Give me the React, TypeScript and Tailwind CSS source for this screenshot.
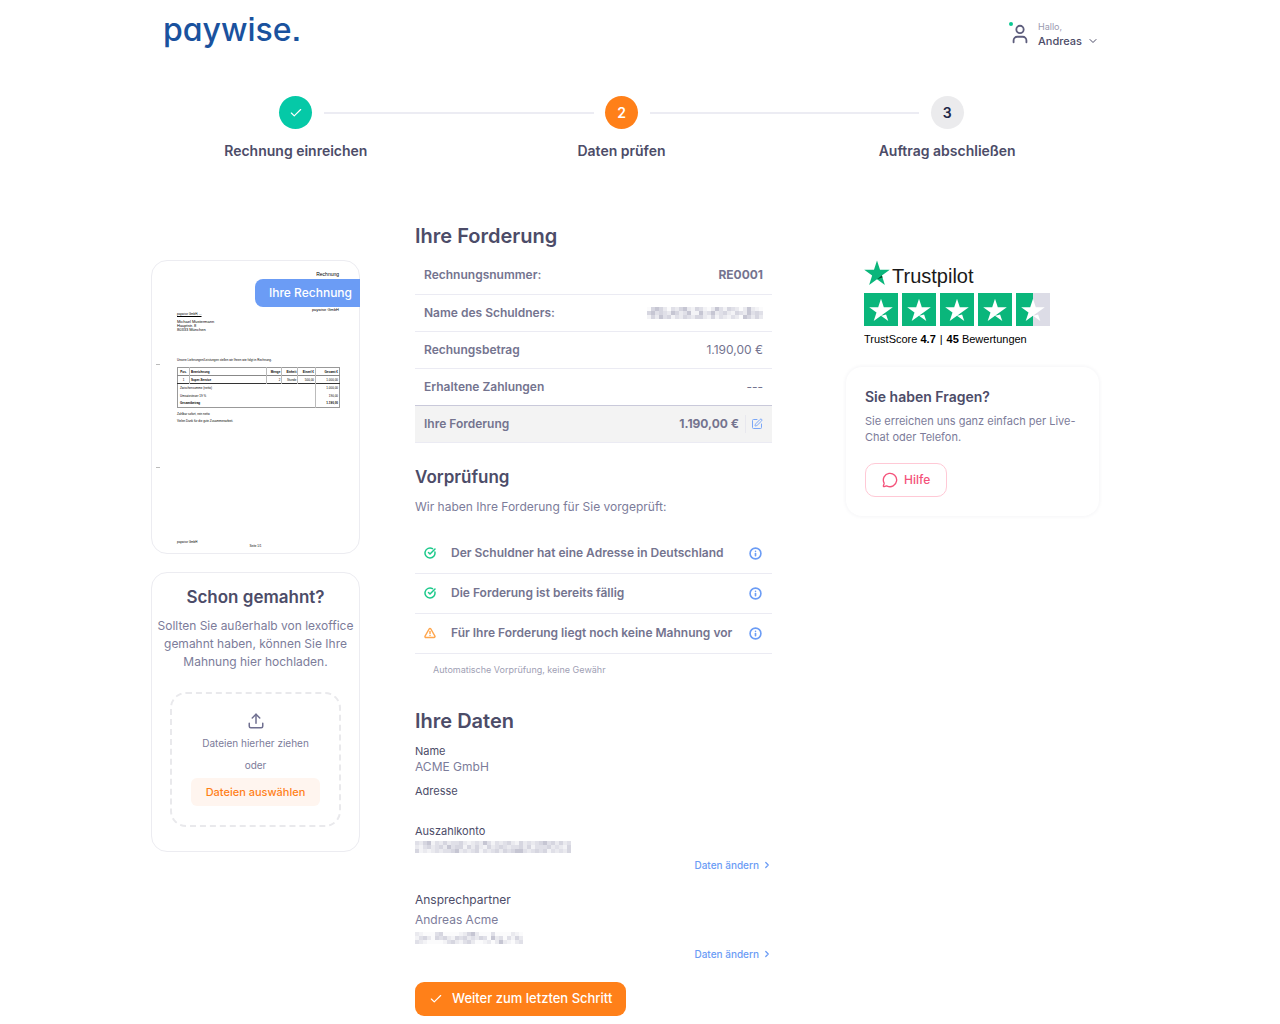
import React from "react";
import {
  Check,
  ChevronDown,
  ChevronRight,
  CircleCheckBig,
  Info,
  MessageCircle,
  SquarePen,
  TriangleAlert,
  Upload,
  User,
} from "lucide-react";

const SHADES = ["#fbfbfc", "#f3f3f6", "#eaeaef", "#e0e0e8", "#d6d6e0", "#c6c6d3"];

/* Pixelated stand-in for private data: each digit is the shade of one cell. */
function Mosaic({ rows, cell, label }: { rows: string[]; cell: number; label: string }) {
  const width = rows[0].length * cell;
  const height = rows.length * cell;
  return (
    <svg width={width} height={height} role="img" aria-label={label} shapeRendering="crispEdges">
      {rows.map((row, y) =>
        row.split("").map((shade, x) => (
          <rect key={`${x}-${y}`} x={x * cell} y={y * cell} width={cell} height={cell} fill={SHADES[Number(shade)]} />
        )),
      )}
    </svg>
  );
}

const STAR = "M12 1.5l2.55 7.85h8.25l-6.68 4.85 2.55 7.85L12 17.2l-6.67 4.85 2.55-7.85L1.2 9.35h8.25z";

function StarTile({ half = false }: { half?: boolean }) {
  return (
    <svg width="34" height="33" viewBox="0 0 34 33" aria-hidden="true">
      <rect width="34" height="33" fill={half ? "#dcdce6" : "#0ab67b"} />
      {half && <rect width="17" height="33" fill="#0ab67b" />}
      <path
        d="M28.8 14.2H19.8L17 5.7l-2.8 8.5H5.2l7.3 5.3-2.8 8.5 7.3-5.3 4.5-3.2zM17 22.7l5.1-1.3 2.2 6.6z"
        fill="#fff"
      />
    </svg>
  );
}

function Trustpilot() {
  return (
    <a href="#trustpilot" className="block pl-[18px] font-['Liberation_Sans',sans-serif] text-[#191919]">
      <span className="flex items-start">
        <svg width="26" height="26" viewBox="1 1 22 22" aria-hidden="true">
          <path d={STAR} fill="#0ab67b" />
          <path d="M16.7 15.9l-.58-1.7L12 17.2z" fill="#005128" />
        </svg>
        <span className="pt-1 pl-[2px] text-[20px] leading-6">Trustpilot</span>
      </span>
      <span className="mt-[5px] flex gap-1">
        <StarTile />
        <StarTile />
        <StarTile />
        <StarTile />
        <StarTile half />
      </span>
      <span className="mt-[5px] block text-[11px] leading-4 text-black">
        TrustScore <b>4.7</b>
        <span className="mx-1">|</span>
        <b>45</b> Bewertungen
      </span>
    </a>
  );
}

function Step({ title, children, tone, line }: { title: string; children: React.ReactNode; tone: string; line?: boolean }) {
  return (
    <li className="relative flex flex-1 flex-col items-center">
      <span className={`flex size-[33px] items-center justify-center rounded-full text-[14px] font-semibold ${tone}`}>
        {children}
      </span>
      {line && (
        <span className="absolute top-4 left-[calc(50%+28px)] h-[2px] w-[calc(100%-56px)] bg-[#ececf3]" />
      )}
      <span className="mt-3 text-[14px] leading-5 font-semibold text-[#4c4c68]">{title}</span>
    </li>
  );
}

function InvoicePreview() {
  return (
    <section
      aria-label="Ihre Rechnung"
      className="relative flex h-[294px] flex-col rounded-2xl border border-[#ececf1] bg-white px-[25px] font-['Liberation_Sans',sans-serif] text-[3px] leading-1 text-black"
    >
      <span className="absolute top-[103px] left-1 h-px w-1 bg-[#bbb]" />
      <span className="absolute top-[206px] left-1 h-px w-1 bg-[#bbb]" />
      <p className="mt-[9px] mr-[-5px] text-right text-[5px] leading-2">Rechnung</p>
      <p className="absolute top-[18px] -right-px rounded-l-lg bg-[#6b9cf5] pr-2 pl-[14px] font-['Inter',sans-serif] text-[12px] leading-7 font-medium text-white">
        Ihre Rechnung
      </p>
      <p className="mt-[30px] mr-[-5px] text-right text-[4px]">paywise GmbH</p>
      <p className="underline">paywise GmbH, ...</p>
      <address className="mt-1 text-[4px] not-italic">
        Michael Mustermann
        <br />
        Hauptstr. 8
        <br />
        80333 München
      </address>
      <p className="mt-[26px] whitespace-nowrap">
        Unsere Lieferungen/Leistungen stellen wir Ihnen wie folgt in Rechnung.
      </p>
      <table className="mt-[5px] w-[163px] border-collapse border border-[#999] text-right">
        <thead>
          <tr className="h-2 border-b border-[#888]">
            <th className="w-3 border-r border-[#bbb] text-center">Pos.</th>
            <th className="w-[77px] border-r border-[#bbb] pl-px text-left">Bezeichnung</th>
            <th className="border-r border-[#bbb] pr-px">Menge</th>
            <th className="border-r border-[#bbb] pr-px">Einheit</th>
            <th className="border-r border-[#bbb] pr-px">Einzel €</th>
            <th className="w-6 pr-px">Gesamt €</th>
          </tr>
        </thead>
        <tbody>
          <tr className="h-2 border-b border-[#333]">
            <td className="border-r border-[#bbb] text-center">1</td>
            <td className="border-r border-[#bbb] pl-px text-left font-bold">Super-Service</td>
            <td className="border-r border-[#bbb] pr-px">2</td>
            <td className="border-r border-[#bbb] pr-px">Stunde</td>
            <td className="border-r border-[#bbb] pr-px">500,00</td>
            <td className="pr-px">1.000,00</td>
          </tr>
          <tr className="h-2">
            <td colSpan={5} className="border-r border-[#bbb] pl-[2px] text-left">Zwischensumme (netto)</td>
            <td className="pr-px">1.000,00</td>
          </tr>
          <tr className="h-2">
            <td colSpan={5} className="border-r border-[#bbb] pl-[2px] text-left">Umsatzsteuer 19 %</td>
            <td className="pr-px">190,00</td>
          </tr>
          <tr className="h-2 font-bold">
            <td colSpan={5} className="border-r border-[#bbb] pl-[2px] text-left">Gesamtbetrag</td>
            <td className="pr-px">1.190,00</td>
          </tr>
        </tbody>
      </table>
      <p className="mt-1">Zahlbar sofort, rein netto</p>
      <p className="mt-[3px] whitespace-nowrap">Vielen Dank für die gute Zusammenarbeit.</p>
      <p className="mt-auto">paywise GmbH</p>
      <p className="mb-[5px] text-center">Seite 1/1</p>
    </section>
  );
}

function UploadCard() {
  return (
    <section className="mt-[18px] rounded-2xl border border-[#ececf1] pt-3 pb-6 text-center">
      <h2 className="text-[17px] leading-6 font-semibold text-[#4c4c68]">Schon gemahnt?</h2>
      <p className="mt-2 px-1 text-[12px] leading-[18px] text-[#7c7c9a]">
        Sollten Sie außerhalb von lexoffice gemahnt haben, können Sie Ihre Mahnung hier hochladen.
      </p>
      <div className="mx-[18px] mt-[21px] flex h-[135px] flex-col items-center rounded-2xl border-2 border-dashed border-[#e9e9ec] pt-[18px] text-[#7c7c9a]">
        <Upload className="size-[18px] text-[#6f6f90]" strokeWidth={2} />
        <p className="mt-[5px] text-[10px] leading-4">Dateien hierher ziehen</p>
        <p className="mt-[6px] text-[10px] leading-4">oder</p>
        <button type="button" className="mt-[5px] rounded-md bg-[#fff5ef] px-[15px] text-[11px] leading-7 font-medium text-[#ff8019]">
          Dateien auswählen
        </button>
      </div>
    </section>
  );
}

function ClaimTable() {
  const label = "h-[37px] pl-[9px] text-left font-semibold";
  const value = "pr-[9px] text-right";
  return (
    <table className="mt-[7px] w-full border-collapse text-[12px] leading-4 text-[#74748f]">
      <tbody>
        <tr className="border-b border-[#ebebf3]">
          <th scope="row" className={label}>Rechnungsnummer:</th>
          <td className={`${value} font-bold`}>RE0001</td>
        </tr>
        <tr className="border-b border-[#ebebf3]">
          <th scope="row" className={label}>Name des Schuldners:</th>
          <td className={value}>
            <span className="flex justify-end">
              <Mosaic
                cell={4}
                label="Name unkenntlich gemacht"
                rows={["04542032452143102531432025210", "45343254235115235234214325343", "14253413243244214132132054242"]}
              />
            </span>
          </td>
        </tr>
        <tr className="border-b border-[#ebebf3]">
          <th scope="row" className={label}>Rechungsbetrag</th>
          <td className={value}>1.190,00 €</td>
        </tr>
        <tr className="border-b border-[#c9c9da]">
          <th scope="row" className={label}>Erhaltene Zahlungen</th>
          <td className={value}>---</td>
        </tr>
        <tr className="border-b border-[#ebebf3] bg-[#f3f3f3]">
          <th scope="row" className={label}>Ihre Forderung</th>
          <td className={`${value} font-bold`}>
            <span className="flex items-center justify-end">
              1.190,00 €
              <button
                type="button"
                aria-label="Forderung bearbeiten"
                className="ml-[6px] flex h-[18px] items-center border-l border-[#e8e8ee] pl-[5px] text-[#7aa7f8]"
              >
                <SquarePen className="size-3" strokeWidth={2} />
              </button>
            </span>
          </td>
        </tr>
      </tbody>
    </table>
  );
}

function CheckRow({ icon, children }: { icon: React.ReactNode; children: React.ReactNode }) {
  return (
    <li className="flex h-10 items-center border-b border-[#ebebf3] pr-[10px] pl-[9px]">
      {icon}
      <span className="ml-[15px] flex-1 text-[12px] font-semibold text-[#74748f]">{children}</span>
      <button type="button" aria-label="Mehr Informationen" className="text-[#6b9cf5]">
        <Info className="size-[13px]" strokeWidth={3} />
      </button>
    </li>
  );
}

function ChangeLink() {
  return (
    <a href="#daten" className="flex items-center justify-end gap-[3px] text-[10px] leading-4 font-medium text-[#6b9cf5]">
      Daten ändern
      <ChevronRight className="size-[10px]" strokeWidth={3} />
    </a>
  );
}

export default function App() {
  return (
    <div className="min-h-screen bg-white pr-[30px] font-['Inter',sans-serif] text-[#4c4c68]">
      <div className="mx-auto w-full max-w-[948px]">
        <header className="flex h-[66px] items-start justify-between pl-3">
          <a
            href="#start"
            aria-label="paywise."
            className="pt-1 text-[32px] leading-[52px] font-medium text-[#1a529e] [font-feature-settings:'cv11','ss07']"
          >
            paywise.
          </a>
          <button type="button" className="mt-5 flex items-center text-left">
            <span className="relative">
              <User className="size-[22px] text-[#5d5d7c]" strokeWidth={2} />
              <span className="absolute top-[-1px] left-0 size-1 rounded-full bg-[#0ac893]" />
            </span>
            <span className="ml-[7px]">
              <span className="block text-[9px] leading-[14px] text-[#9a9ab0]">Hallo,</span>
              <span className="block text-[11px] leading-[14px] font-medium">Andreas</span>
            </span>
            <ChevronDown className="mt-[14px] ml-[5px] size-3" />
          </button>
        </header>
      </div>

      <div className="pr-[7px]">
        <ol className="mx-auto mt-[30px] flex w-full max-w-[977px]">
          <Step title="Rechnung einreichen" tone="bg-[#05c9a7] text-white" line>
            <Check className="size-[14px]" />
          </Step>
          <Step title="Daten prüfen" tone="bg-[#ff8019] text-white" line>
            2
          </Step>
          <Step title="Auftrag abschließen" tone="bg-[#ebebed] text-[#1e2849]">
            3
          </Step>
        </ol>
      </div>

      <main className="mx-auto mt-[61px] flex w-full max-w-[948px] items-start">
        <aside className="mt-[38px] w-[209px] shrink-0">
          <InvoicePreview />
          <UploadCard />
        </aside>

        <div className="ml-[55px] min-w-0 flex-1">
          <h1 className="text-[20px] leading-7 font-semibold">Ihre Forderung</h1>
          <ClaimTable />

          <h2 className="mt-[22px] text-[17px] leading-6 font-semibold">Vorprüfung</h2>
          <p className="mt-2 text-[12px] leading-5 text-[#7c7c9a]">Wir haben Ihre Forderung für Sie vorgeprüft:</p>
          <ul className="mt-[17px]">
            <CheckRow icon={<CircleCheckBig className="size-3 text-[#1dc98b]" strokeWidth={3} />}>
              Der Schuldner hat eine Adresse in Deutschland
            </CheckRow>
            <CheckRow icon={<CircleCheckBig className="size-3 text-[#1dc98b]" strokeWidth={3} />}>
              Die Forderung ist bereits fällig
            </CheckRow>
            <CheckRow icon={<TriangleAlert className="size-3 text-[#ffa64d]" strokeWidth={3} />}>
              Für Ihre Forderung liegt noch keine Mahnung vor
            </CheckRow>
          </ul>
          <p className="mt-2 pl-[18px] text-[9px] leading-4 text-[#a0a0b4]">Automatische Vorprüfung, keine Gewähr</p>

          <h1 className="mt-[29px] text-[20px] leading-7 font-semibold">Ihre Daten</h1>
          <dl className="mt-2 text-[11px] leading-4">
            <dt>Name</dt>
            <dd className="text-[12px] text-[#7c7c9a]">ACME GmbH</dd>
            <dt className="mt-2">Adresse</dt>
            <dd className="h-6" />
            <dt>Auszahlkonto</dt>
            <dd className="pt-[2px]">
              <Mosaic
                cell={4}
                label="Konto unkenntlich gemacht"
                rows={[
                  "324513242334212325313234214232345342423",
                  "213423425344142421423432334241333423214",
                  "412123233452323413234243455323434132324",
                ]}
              />
            </dd>
          </dl>
          <div className="mt-1">
            <ChangeLink />
          </div>
          <dl className="mt-[17px] text-[12px] leading-5">
            <dt>Ansprechpartner</dt>
            <dd className="text-[#7c7c9a]">Andreas Acme</dd>
            <dd className="pt-[2px]">
              <Mosaic
                cell={4}
                label="Kontakt unkenntlich gemacht"
                rows={["210003400001245200030000210", "134204342143423243052303142", "321000013421342001202521023"]}
              />
            </dd>
          </dl>
          <div className="mt-[2px]">
            <ChangeLink />
          </div>
          <button
            type="button"
            className="mt-5 flex h-[34px] items-center gap-[9px] rounded-[9px] bg-[#ff8019] px-[14px] text-[13px] font-medium text-white"
          >
            <Check className="size-[14px]" />
            Weiter zum letzten Schritt
          </button>
        </div>

        <aside className="mt-[38px] ml-[74px] w-[253px] shrink-0">
          <Trustpilot />
          <section className="mt-5 rounded-2xl px-[19px] pt-[18px] pb-[19px] shadow-[0_0_4px_rgba(40,40,80,0.07)]">
            <h2 className="text-[14px] leading-6 font-semibold">Sie haben Fragen?</h2>
            <p className="mt-1 text-[11px] leading-4 text-[#7c7c9a]">
              Sie erreichen uns ganz einfach per Live-Chat oder Telefon.
            </p>
            <button
              type="button"
              className="mt-[18px] flex h-[34px] items-center gap-[6px] rounded-[10px] border border-[#ffc9d6] px-4 text-[12px] font-medium text-[#f4527a]"
            >
              <MessageCircle className="size-4" strokeWidth={2} />
              Hilfe
            </button>
          </section>
        </aside>
      </main>
    </div>
  );
}
